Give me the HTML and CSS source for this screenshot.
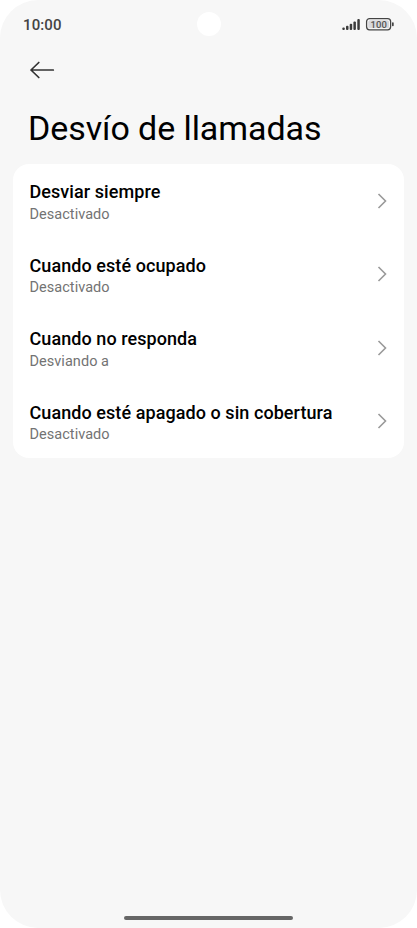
FILE: index.html
```html
<!DOCTYPE html>
<html lang="es">
<head>
<meta charset="utf-8">
<title>Desvío de llamadas</title>
<link rel="stylesheet" href="styles.css">
</head>
<body>
<div class="screen">
  <header class="status">
    <span class="time">10:00</span>
    <span class="camera"></span>
    <svg class="indicators" width="54" height="14" viewBox="0 0 54 14">
      <g fill="#3c3c3c"><rect x="1.300" y="10.400" width="2.500" height="2.600" rx="1"/><rect x="5" y="8.800" width="2.500" height="4.200" rx="1"/><rect x="8.700" y="6.800" width="2.500" height="6.200" rx="1"/><rect x="12.400" y="4.600" width="2.500" height="8.400" rx="1"/><rect x="16.300" y="2" width="2.500" height="11" rx="1"/></g>
      <rect x="25.600" y="1.600" width="24" height="11.200" rx="3" fill="#fff" stroke="#444" stroke-width="1.300"/>
      <rect x="27.200" y="3.200" width="20.800" height="8" rx="1.500" fill="#d8d8dc"/>
      <rect x="51" y="5.200" width="1.700" height="4" rx=".8" fill="#444"/>
      <text x="37.700" y="10.600" text-anchor="middle" class="charge">100</text>
    </svg>
  </header>
  <nav class="toolbar">
    <svg width="26" height="18" viewBox="0 0 26 18" fill="none" stroke="#333" stroke-width="1.700" stroke-linecap="round" stroke-linejoin="round"><path d="M24.300 9H2M9.800 1.500L2 9l7.800 7.500"/></svg>
  </nav>
  <h1>Desvío de llamadas</h1>
  <main class="card">
    <div class="row"><div class="label"><h2>Desviar siempre</h2><p>Desactivado</p></div><svg class="chevron" viewBox="0 0 10 16"><path d="M1.500 1l7 7-7 7"/></svg></div>
    <div class="row"><div class="label"><h2>Cuando esté ocupado</h2><p>Desactivado</p></div><svg class="chevron" viewBox="0 0 10 16"><path d="M1.500 1l7 7-7 7"/></svg></div>
    <div class="row"><div class="label"><h2>Cuando no responda</h2><p>Desviando a</p></div><svg class="chevron" viewBox="0 0 10 16"><path d="M1.500 1l7 7-7 7"/></svg></div>
    <div class="row"><div class="label"><h2>Cuando esté apagado o sin cobertura</h2><p>Desactivado</p></div><svg class="chevron" viewBox="0 0 10 16"><path d="M1.500 1l7 7-7 7"/></svg></div>
  </main>
  <div class="home"></div>
</div>
</body>
</html>
```
FILE: styles.css
```css
* { box-sizing: border-box; }
body { margin: 0; background: #fff; font-family: Roboto, sans-serif; }
h1, h2, p { margin: 0; }
.screen { width: 417px; height: 928px; background: #f7f7f7; border-radius: 38px; overflow: hidden; display: flex; flex-direction: column; }
.status { height: 48px; padding: 0 22px 0 23px; display: grid; grid-template-columns: 1fr 24px 1fr; align-items: center; }
.time { padding-top: 2px; font-size: 15px; font-weight: 500; color: #444; letter-spacing: .1px; }
.camera { width: 24px; height: 24px; margin-left: -.5px; border-radius: 50%; background: #fff; }
.indicators { justify-self: end; }
.charge { font-size: 9.500px; font-weight: 500; fill: #555; }
.toolbar { height: 44px; padding: 13px 0 0 29px; }
.toolbar svg { display: block; }
h1 { height: 72px; padding: 16px 0 0 28px; font-size: 34px; line-height: 40px; font-weight: 400; letter-spacing: -.08px; color: #000; }
.card { margin: 0 13px; padding: 0 17px 0 16.500px; height: 294px; background: #fff; border-radius: 16px; }
.row { height: 73.500px; display: flex; align-items: center; justify-content: space-between; }
.label { padding-top: 4.800px; }
h2 { font-size: 18px; line-height: 22px; font-weight: 500; letter-spacing: .07px; color: #000; }
p { font-size: 14.500px; line-height: 20px; letter-spacing: .04px; color: #737373; margin-top: 1.400px; }
.chevron { width: 10px; height: 16px; fill: none; stroke: #999; stroke-width: 1.600; }
.home { width: 169px; height: 4px; border-radius: 2px; background: #666; margin: auto auto 8px; }
```
